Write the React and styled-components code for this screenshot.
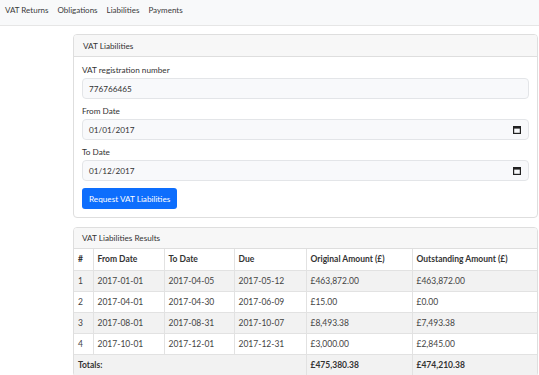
import React from 'react'
import styled, { createGlobalStyle } from 'styled-components'

const GlobalStyle = createGlobalStyle`
  *, *::before, *::after { box-sizing: border-box; }
  html, body {
    margin: 0;
    padding: 0;
    background: #fff;
    font-family: Lato, "Noto Sans", sans-serif;
    color: #212529;
  }
`;

// Top navigation
export const NavBar = styled.nav`
  height: 26px;
  display: flex;
  align-items: flex-start;
  gap: 9px;
  padding: 4px 0 0 5px;
  background: #f8f9fa;
  border-bottom: 1px solid #e6e6e6;
  font-size: 8px;
  line-height: 12px;
`;

export const NavLink = styled.a`
  color: #3a3a3a;
  text-decoration: none;
  cursor: pointer;
`;

export const Main = styled.main`
  display: flex;
  flex-direction: column;
  gap: 9px;
  padding: 8px 1px 0 73px;
`;

export const Card = styled.section`
  border: 1px solid #dedede;
  border-radius: 4px;
  background: #fff;
  overflow: hidden;
`;

export const CardHeader = styled.div`
  height: ${p => p.$h || 21}px;
  display: flex;
  align-items: center;
  padding-left: ${p => p.$pad || 9}px;
  background: #f7f7f7;
  border-bottom: 1px solid #dedede;
  font-size: 8.2px;
  color: #333;
`;

export const CardBody = styled.div`
  padding: 8px 8px 8px 8px;
  display: flex;
  flex-direction: column;
`;

export const Field = styled.div`
  display: flex;
  flex-direction: column;
  gap: 2px;
  margin-bottom: 7px;
`;

export const Label = styled.label`
  font-size: 8.2px;
  line-height: 11px;
  color: #333;
`;

export const InputBox = styled.div`
  height: 21px;
  display: flex;
  align-items: center;
  justify-content: space-between;
  padding: 0 7px 0 6px;
  background: #f8f9fb;
  border: 1px solid #e3e5e8;
  border-radius: 4px;
  font-size: 8.2px;
  color: #333;
`;

export const Button = styled.button`
  align-self: flex-start;
  height: 21px;
  padding: 0 7px;
  background: #0d6efd;
  color: #fff;
  border: none;
  border-radius: 3px;
  font-family: inherit;
  font-size: 8.2px;
  cursor: pointer;
`;

export const Table = styled.table`
  width: 100%;
  border-collapse: collapse;
  table-layout: fixed;
  font-size: 8.5px;
  color: #444;
`;

export const Th = styled.th`
  height: 21px;
  padding: 0 4px;
  text-align: left;
  font-weight: 700;
  color: #333;
  border-left: 1px solid #e2e2e2;
  border-bottom: 1px solid #e2e2e2;
  &:first-child { border-left: none; }
`;

export const Row = styled.tr`
  background: ${p => p.$striped ? '#f2f2f2' : '#fff'};
`;

export const Td = styled.td`
  height: 21px;
  padding: 0 4px;
  border-left: 1px solid #e2e2e2;
  border-bottom: 1px solid #e2e2e2;
  font-weight: ${p => p.$bold ? 700 : 400};
  color: ${p => p.$bold ? '#333' : '#444'};
  white-space: nowrap;
  &:first-child { border-left: none; }
`;

const CalendarIcon = () => (
  <svg width="8" height="8" viewBox="0 0 8 8">
    <rect x="0.6" y="0.6" width="6.8" height="6.8" fill="none" stroke="#222" strokeWidth="1.2" />
    <rect x="0.6" y="0.6" width="6.8" height="2" fill="#222" />
  </svg>
);

const rows = [
  ['1', '2017-01-01', '2017-04-05', '2017-05-12', '£463,872.00', '£463,872.00'],
  ['2', '2017-04-01', '2017-04-30', '2017-06-09', '£15.00', '£0.00'],
  ['3', '2017-08-01', '2017-08-31', '2017-10-07', '£8,493.38', '£7,493.38'],
  ['4', '2017-10-01', '2017-12-01', '2017-12-31', '£3,000.00', '£2,845.00'],
];

export default function App() {
  return (
    <>
      <GlobalStyle />
      <NavBar>
        <NavLink>VAT Returns</NavLink>
        <NavLink>Obligations</NavLink>
        <NavLink>Liabilities</NavLink>
        <NavLink>Payments</NavLink>
      </NavBar>
      <Main>
        <Card>
          <CardHeader $h={22}>VAT Liabilities</CardHeader>
          <CardBody>
            <Field>
              <Label>VAT registration number</Label>
              <InputBox>776766465</InputBox>
            </Field>
            <Field>
              <Label>From Date</Label>
              <InputBox>01/01/2017<CalendarIcon /></InputBox>
            </Field>
            <Field>
              <Label>To Date</Label>
              <InputBox>01/12/2017<CalendarIcon /></InputBox>
            </Field>
            <Button>Request VAT Liabilities</Button>
          </CardBody>
        </Card>
        <Card>
          <CardHeader $pad={8}>VAT Liabilities Results</CardHeader>
          <Table>
            <colgroup>
              <col style={{ width: 19 }} />
              <col style={{ width: 71 }} />
              <col style={{ width: 70 }} />
              <col style={{ width: 72 }} />
              <col style={{ width: 106 }} />
              <col />
            </colgroup>
            <thead>
              <tr>
                <Th>#</Th>
                <Th>From Date</Th>
                <Th>To Date</Th>
                <Th>Due</Th>
                <Th>Original Amount (£)</Th>
                <Th>Outstanding Amount (£)</Th>
              </tr>
            </thead>
            <tbody>
              {rows.map((r, i) => (
                <Row key={r[0]} $striped={i % 2 === 0}>
                  {r.map((c, j) => <Td key={j}>{c}</Td>)}
                </Row>
              ))}
              <Row $striped>
                <Td colSpan={4} $bold>Totals:</Td>
                <Td $bold>£475,380.38</Td>
                <Td $bold>£474,210.38</Td>
              </Row>
            </tbody>
          </Table>
        </Card>
      </Main>
    </>
  );
}
